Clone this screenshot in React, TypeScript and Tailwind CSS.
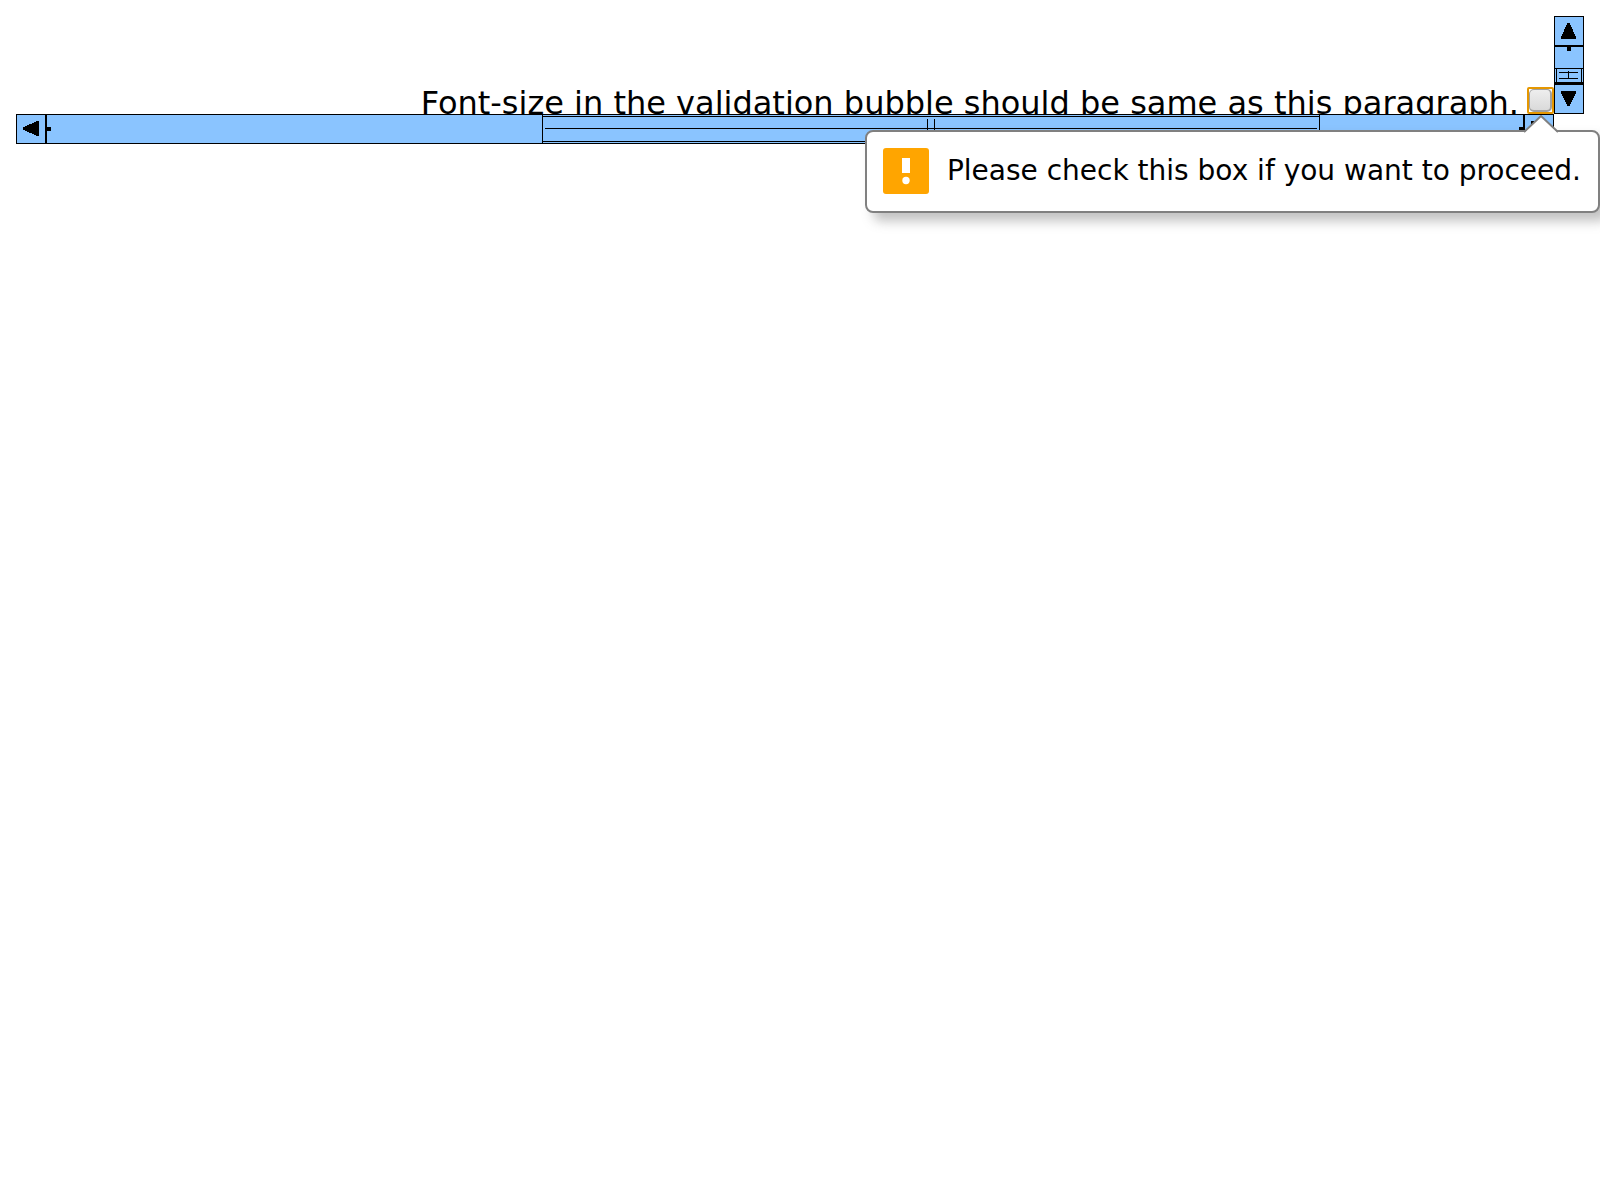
import React from "react";

type Direction = "up" | "down" | "left" | "right";

const arrowPaths: Record<Direction, string> = {
  up: "M6.5 0H8.5L15 14V16H0V14Z",
  down: "M0 0H15V2L8.5 15H6.5L0 2Z",
  left: "M0 6.5V8.5L14 15H16V0H14Z",
  right: "M0 0H2L16 6.5V8.5L2 15H0Z",
};

function ScrollButton({ direction }: { direction: Direction }) {
  const vertical = direction === "up" || direction === "down";
  return (
    <button
      type="button"
      aria-label={`Scroll ${direction}`}
      className="flex h-[30px] w-[30px] shrink-0 items-start justify-start border border-black p-[6px]"
    >
      <svg
        className="block shrink-0"
        width={vertical ? 15 : 16}
        height={vertical ? 16 : 15}
        shapeRendering="crispEdges"
        aria-hidden="true"
      >
        <path d={arrowPaths[direction]} />
      </svg>
    </button>
  );
}

function VerticalScrollbar() {
  return (
    <div className="flex flex-col bg-[#8ac4ff]">
      <ScrollButton direction="up" />
      <div className="flex flex-1 flex-col items-stretch border-x border-t border-black">
        <div className="flex flex-1 justify-center">
          <span className="h-1 w-1 bg-black" />
        </div>
        <svg className="block h-4 w-[28px]" viewBox="0 0 28 16" shapeRendering="crispEdges" aria-hidden="true">
          <path d="M0 0H28V1H0ZM1 1H2V14H1ZM26 1H27V14H26ZM4 4H23V5H4ZM4 10H23V11H4ZM13 3H14V10H13ZM0 14H28V16H0Z" />
        </svg>
      </div>
      <ScrollButton direction="down" />
    </div>
  );
}

function HorizontalScrollbar() {
  return (
    <div className="flex bg-[#8ac4ff]">
      <ScrollButton direction="left" />
      <div className="flex flex-1 border-x border-y border-black">
        <div className="flex flex-[496] items-center">
          <span className="h-1 w-1 bg-black" />
        </div>
        <div className="flex flex-[777] border-x border-black py-px">
          <div className="flex flex-1 items-center border-y border-black px-[2px] pb-px">
            <div className="h-px flex-1 bg-black" />
            <div className="flex h-[19px] w-2 items-center border-x border-black">
              <div className="h-px flex-1 bg-black" />
            </div>
            <div className="h-px flex-1 bg-black" />
          </div>
        </div>
        <div className="flex flex-[203] items-center justify-end">
          <span className="h-1 w-1 bg-black" />
        </div>
      </div>
      <ScrollButton direction="right" />
    </div>
  );
}

function ValidationBubble() {
  return (
    <div
      role="alert"
      className="absolute top-[130px] right-0 flex items-center gap-[18px] rounded-lg border-2 border-[#808080] bg-white pt-4 pr-[17px] pb-[17px] pl-4 shadow-[8px_8px_12px_rgba(100,100,100,0.4)]"
    >
      <svg className="absolute -top-[17px] right-[39px]" width="36" height="18" aria-hidden="true">
        <path d="M1 18L18 1L35 18Z" fill="#fff" />
        <path d="M1 17L18 1L35 17" fill="none" stroke="#808080" strokeWidth="2" />
      </svg>
      <svg className="block shrink-0" width="46" height="46" aria-hidden="true">
        <rect width="46" height="46" rx="3" fill="#ffa500" />
        <rect x="19" y="10" width="8" height="15" fill="#fff" />
        <circle cx="23" cy="32.5" r="3.7" fill="#fff" />
      </svg>
      <p className="text-[28px] leading-8 whitespace-nowrap">
        Please check this box if you want to proceed.
      </p>
    </div>
  );
}

export default function App() {
  return (
    <main className="relative min-h-screen overflow-hidden bg-white p-4 font-['DejaVu_Sans',sans-serif] text-black">
      <div className="grid grid-cols-[1fr_30px] grid-rows-[98px_30px]">
        <div className="flex items-start justify-end overflow-hidden pt-[69px]">
          <label htmlFor="proceed" className="pr-2 text-[32px] leading-9 whitespace-nowrap">
            Font-size in the validation bubble should be same as this paragraph.
          </label>
          <span className="mt-[2px] flex shrink-0 rounded-[2px] border-2 border-[#e59700]">
            <input
              id="proceed"
              type="checkbox"
              required
              className="block h-[23px] w-[23px] appearance-none rounded-[5px] border border-r-2 border-b-2 border-[#a0a0a0] bg-linear-to-b from-[#eeeeee] to-[#dadada]"
            />
          </span>
        </div>
        <VerticalScrollbar />
        <HorizontalScrollbar />
      </div>
      <ValidationBubble />
    </main>
  );
}
